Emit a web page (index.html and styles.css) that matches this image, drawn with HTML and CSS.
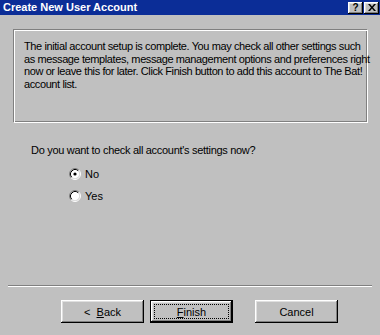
FILE: index.html
```html
<!DOCTYPE html>
<html>

<head>
    <meta name="viewport" content="width=device-width, initial-scale=1">
    <title>Create New User Account</title>
    <link rel="stylesheet" href="styles.css">
</head>

<body>
    <div class="titlebar">
        <span class="title">Create New User Account</span>
        <div class="caption-buttons">
            <span class="cap-btn">?</span>
            <span class="cap-btn">
                <svg width="8" height="7" viewBox="0 0 8 7">
                    <path d="M0 0h2l2 2.5 2-2.5h2l-3 3.5 3 3.5h-2l-2-2.5-2 2.5h-2l3-3.5z" fill="#000"/>
                </svg>
            </span>
        </div>
    </div>

    <div class="content">
        <div class="info-box">
            <p>The initial account setup is complete. You may check all other settings such<br>as message templates, message management options and preferences right<br>now or leave this for later. Click Finish button to add this account to The Bat!<br>account list.</p>
        </div>

        <p class="question">Do you want to check all account's settings now?</p>

        <div class="options">
            <label class="radio">
                <svg width="12" height="12" viewBox="0 0 12 12">
                    <circle cx="6" cy="6" r="4.5" fill="#fff"/>
                    <path d="M2.11 9.89A5.5 5.5 0 0 1 9.89 2.11" stroke="#808080" fill="none"/>
                    <path d="M9.89 2.11A5.5 5.5 0 0 1 2.11 9.89" stroke="#fff" fill="none"/>
                    <path d="M2.82 9.18A4.5 4.5 0 0 1 9.18 2.82" stroke="#000" fill="none"/>
                    <path d="M9.18 2.82A4.5 4.5 0 0 1 2.82 9.18" stroke="#dfdfdf" fill="none"/>
                    <circle cx="6" cy="6" r="1.6" fill="#000"/>
                </svg>
                No
            </label>
            <label class="radio">
                <svg width="12" height="12" viewBox="0 0 12 12">
                    <circle cx="6" cy="6" r="4.5" fill="#fff"/>
                    <path d="M2.11 9.89A5.5 5.5 0 0 1 9.89 2.11" stroke="#808080" fill="none"/>
                    <path d="M9.89 2.11A5.5 5.5 0 0 1 2.11 9.89" stroke="#fff" fill="none"/>
                    <path d="M2.82 9.18A4.5 4.5 0 0 1 9.18 2.82" stroke="#000" fill="none"/>
                    <path d="M9.18 2.82A4.5 4.5 0 0 1 2.82 9.18" stroke="#dfdfdf" fill="none"/>
                </svg>
                Yes
            </label>
        </div>
    </div>

    <div class="footer">
        <div class="separator"></div>
        <div class="buttons">
            <button class="btn">&lt;&nbsp; <u>B</u>ack</button>
            <button class="btn btn-default"><span class="focus"><u>F</u>inish</span></button>
            <button class="btn btn-cancel">Cancel</button>
        </div>
    </div>
</body>

</html>
```

FILE: styles.css
```css
body {
    font-family: "Liberation Sans", Arial, Helvetica, sans-serif;
    font-size: 11px;
    margin: 0;
    padding: 0;
    width: 380px;
    height: 335px;
    overflow: hidden;
    background-color: #c0c0c0;
    color: #000;
    display: flex;
    flex-direction: column;
}

.titlebar {
    height: 15px;
    background-color: #0b2d97;
    display: flex;
    align-items: center;
    justify-content: space-between;
    padding: 0 1px 0 3px;
}

.title {
    color: #fff;
    font-weight: bold;
    line-height: 15px;
}

.caption-buttons {
    display: flex;
    gap: 1px;
}

.cap-btn {
    width: 15px;
    height: 12px;
    background-color: #c0c0c0;
    box-shadow: inset -1px -1px #000, inset 1px 1px #fff, inset -2px -2px #808080, inset 2px 2px #dfdfdf;
    display: flex;
    align-items: center;
    justify-content: center;
    font-weight: bold;
    font-size: 10px;
    line-height: 12px;
}

.content {
    flex: 1;
}

.info-box {
    margin: 14px 12px 0 13px;
    height: 94px;
    box-sizing: border-box;
    border: 1px solid;
    border-color: #808080 #fff #fff #808080;
    box-shadow: inset 1px 1px #fff, inset -1px -1px #808080;
    padding: 10px 10px 0 10px;
}

.info-box p {
    margin: 0;
    line-height: 12.5px;
    letter-spacing: -0.4px;
    white-space: nowrap;
}

.question {
    margin: 21px 0 0 31px;
    line-height: 13px;
    letter-spacing: -0.3px;
}

.options {
    margin: 11px 0 0 69px;
    display: flex;
    flex-direction: column;
    gap: 9px;
}

.radio {
    display: flex;
    align-items: flex-start;
    gap: 4px;
    line-height: 13px;
}

.separator {
    margin: 0 8px;
    border-top: 1px solid #808080;
    border-bottom: 1px solid #fff;
}

.buttons {
    display: flex;
    padding: 13px 0 12px 61px;
    gap: 6px;
}

.btn {
    width: 83px;
    height: 23px;
    box-sizing: border-box;
    padding: 0;
    border: none;
    background-color: #c0c0c0;
    box-shadow: inset -1px -1px #000, inset 1px 1px #fff, inset -2px -2px #808080, inset 2px 2px #dfdfdf;
    font-family: "Liberation Sans", Arial, sans-serif;
    font-size: 11px;
    color: #000;
}

.btn-default {
    display: flex;
    padding: 4px;
    box-shadow: inset 0 0 0 1px #000, inset -2px -2px #000, inset 2px 2px #fff, inset -3px -3px #808080, inset 3px 3px #dfdfdf;
}

.focus {
    flex: 1;
    border: 1px dotted #000;
    display: flex;
    align-items: center;
    justify-content: center;
}

.btn-cancel {
    margin-left: 16px;
}
```
